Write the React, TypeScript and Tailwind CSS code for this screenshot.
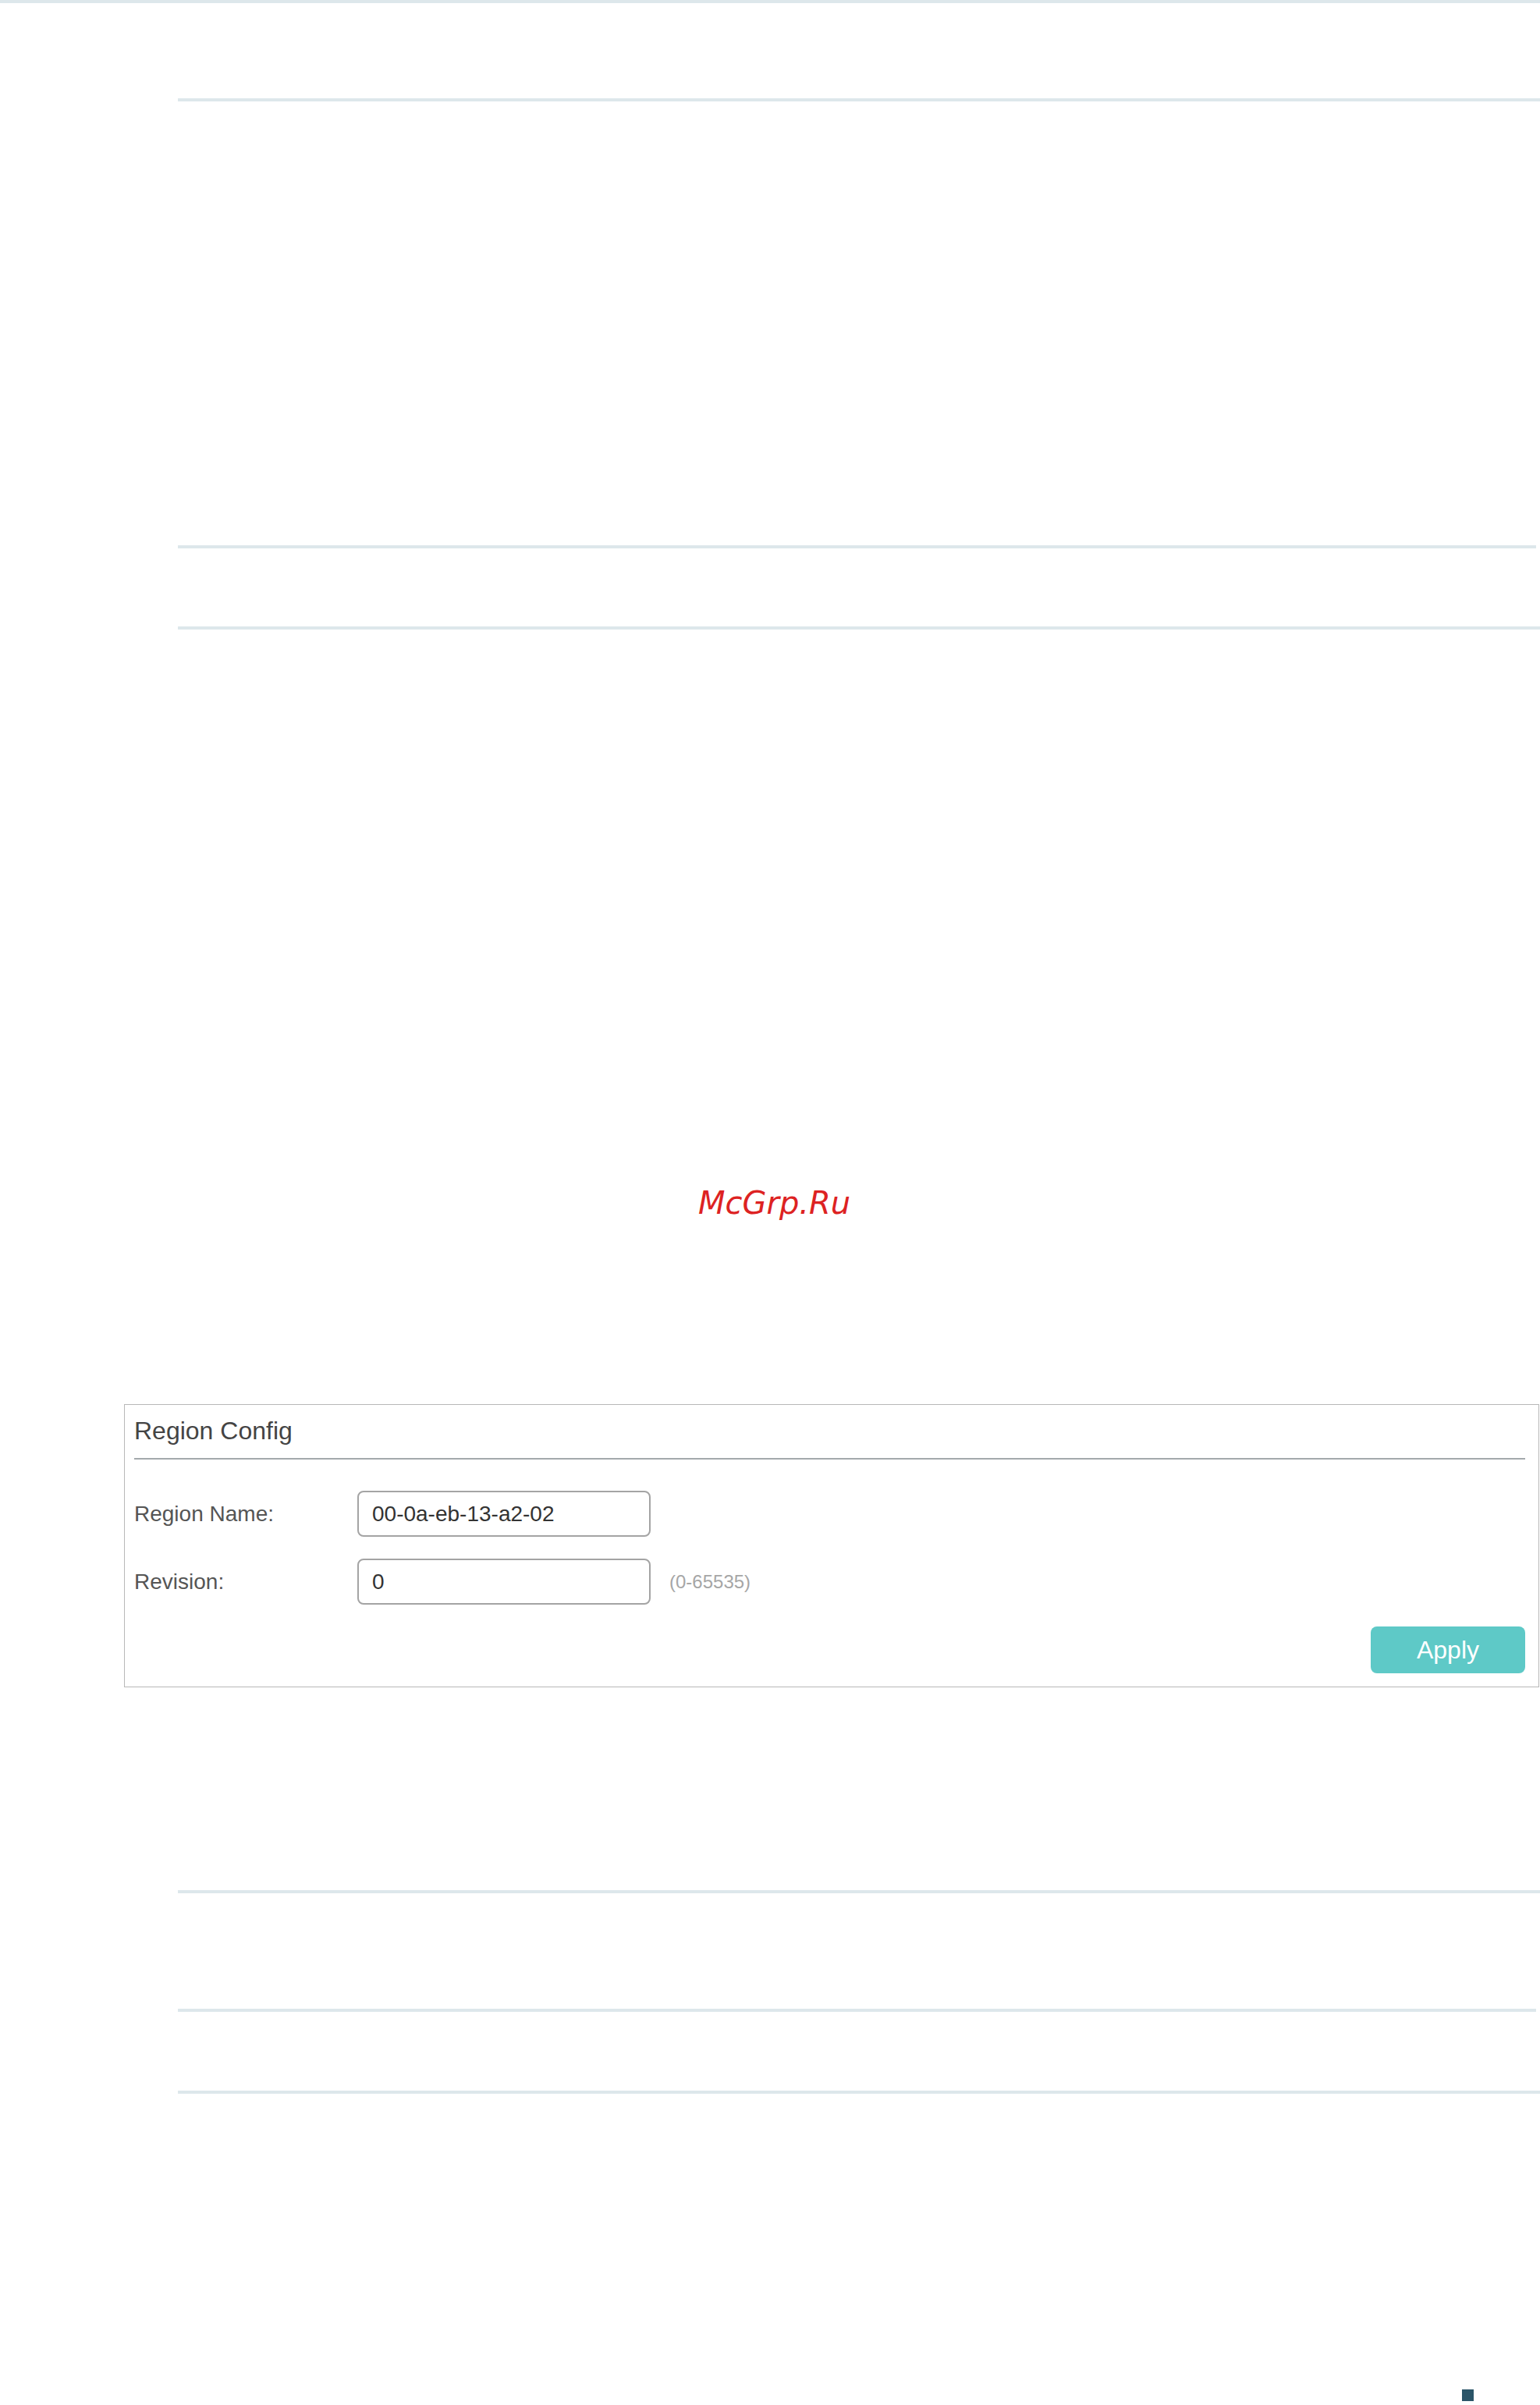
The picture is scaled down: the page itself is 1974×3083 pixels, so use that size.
export default function App() {
  return (
    <div className="w-[1974px] h-[3083px] bg-white font-['Liberation_Sans',Arial,sans-serif]">
      <div className="h-[4px] bg-[#dde7eb]" />

      {/* upper rules */}
      <div className="ml-[228px] mt-[122px] h-[4px] bg-[#dde7eb]" />
      <div className="ml-[228px] mt-[569px] mr-[5px] h-[4px] bg-[#dde7eb]" />
      <div className="ml-[228px] mt-[100px] h-[4px] bg-[#dde7eb]" />

      {/* watermark */}
      <div className="mt-[711px] pl-[895px] h-[48px] text-[40px] leading-[48px] italic text-[#dd2222] font-['DejaVu_Sans',sans-serif]">
        McGrp.Ru
      </div>

      {/* Region Config panel */}
      <div className="ml-[159px] mt-[234px] w-[1814px] border border-[#b8b8b8] pl-[12px] pr-[17px] pt-[15px] pb-[17px]">
        <div className="h-[36px] text-[32px] leading-[36px] text-[#444]">Region Config</div>
        <div className="mt-[17px] h-[2px] bg-[#a3a9ac]" />

        <div className="mt-[40px] flex flex-col gap-[28px]">
          <div className="flex items-center h-[59px]">
            <div className="w-[286px] text-[28px] text-[#555]">Region Name:</div>
            <div className="w-[376px] h-[59px] rounded-[8px] border-2 border-[#a4a4a4] pl-[17px] flex items-center text-[28px] text-[#333]">
              00-0a-eb-13-a2-02
            </div>
          </div>
          <div className="flex items-center h-[59px]">
            <div className="w-[286px] text-[28px] text-[#555]">Revision:</div>
            <div className="w-[376px] h-[59px] rounded-[8px] border-2 border-[#a4a4a4] pl-[17px] flex items-center text-[28px] text-[#333]">
              0
            </div>
            <div className="ml-[24px] text-[24px] text-[#a6a6a6]">(0-65535)</div>
          </div>
        </div>

        <div className="mt-[28px] flex justify-end">
          <button className="w-[198px] h-[60px] rounded-[8px] bg-[#5ec9c7] text-white text-[32px] leading-none">
            Apply
          </button>
        </div>
      </div>

      {/* lower rules */}
      <div className="ml-[228px] mt-[260px] h-[4px] bg-[#dde7eb]" />
      <div className="ml-[228px] mt-[148px] mr-[5px] h-[4px] bg-[#dde7eb]" />
      <div className="ml-[228px] mt-[101px] h-[4px] bg-[#dde7eb]" />

      <div className="ml-[1874px] mt-[379px] w-[15px] h-[15px] bg-[#2b5568]" />
    </div>
  );
}
